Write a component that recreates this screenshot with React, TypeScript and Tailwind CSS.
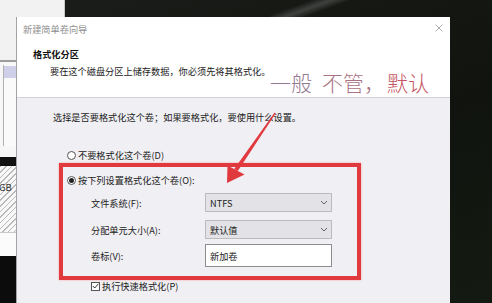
import React from "react";

const cjk = "font-['Noto_Sans_CJK_SC','Noto_Sans',sans-serif]";

const Chevron = () => (
  <svg width="8" height="5" viewBox="0 0 8 5" className="mr-[3px]">
    <polyline points="1,1 4,4 7,1" fill="none" stroke="#555" strokeWidth="0.9" />
  </svg>
);

const Combo = ({ value }: { value: string }) => (
  <div className="w-[127px] h-[19px] bg-[#e3e2e6] border border-[#bcbbbe] flex items-center justify-between pl-[4px]">
    <span className="text-[9.2px] leading-[12px] text-[#222]">{value}</span>
    <Chevron />
  </div>
);

const Radio = ({ checked, label }: { checked?: boolean; label: string }) => (
  <div className="flex items-center gap-[2px] h-[12px] ml-[14px]">
    <div className="w-[9px] h-[9px] rounded-full border border-[#555] bg-white flex items-center justify-center">
      {checked && <div className="w-[5px] h-[5px] rounded-full bg-[#222]" />}
    </div>
    <span className="text-[9.2px] leading-[12px] text-[#222]">{label}</span>
  </div>
);

const LeftWindow = () => (
  <div className="absolute left-0 top-0 w-[65px] h-[303px] bg-[#f0f0f0] border-r border-[#c8c8c8] flex flex-col">
    <div className="h-[60px] bg-[#f2f2f2]" />
    <div className="h-[2px] bg-[#9d9d9d]" />
    <div className="h-[95px] bg-[#f7f7f7] pl-[3px] pt-[3px] flex flex-col">
      <div className="h-[81px] border-l border-[#b0b0b0] bg-[#fafafa] pt-[1px]">
        <div className="h-[12px] bg-[#cfcfe9]" />
      </div>
    </div>
    <div className="h-[9px] bg-[#111]" />
    <div className="h-[66px] bg-[repeating-linear-gradient(135deg,#b9b9b9_0px,#b9b9b9_1px,#f8f8f8_1px,#f8f8f8_4px)] pt-[15px]">
      <span className={`${cjk} block text-[9.5px] leading-[12px] text-[#333] -ml-[1px]`}>GB</span>
    </div>
    <div className="h-[1px] bg-[#c9c9c9]" />
    <div className="h-[23px] bg-[#fbfbfb]" />
    <div className="flex-1 bg-[#0b0c0b]" />
  </div>
);

export default function App() {
  return (
    <div className={`${cjk} relative w-[492px] h-[303px] overflow-hidden bg-[linear-gradient(160deg,#1b1d1a,#10130e_55%,#141a12)]`}>
      {/* streaks on the dark desktop at the top */}
      <div className="absolute left-[270px] top-0 w-[90px] h-[17px] bg-[linear-gradient(160deg,transparent_30%,#5a5c5a_45%,transparent_60%)] opacity-60" />

      <LeftWindow />

      {/* wizard dialog */}
      <div className="absolute left-[16px] top-[17px] w-[434px] bottom-0 flex flex-col border-l border-[#a3a3a3]">
        <div className="h-[80px] bg-white flex flex-col relative">
          <div className="pt-[6px] pl-[6px] text-[9.2px] leading-[12px] text-[#8e8e8e]">新建简单卷向导</div>
          <div className="mt-[13px] pl-[16px] text-[9.2px] leading-[12px] font-bold text-[#111]">格式化分区</div>
          <div className="mt-[5px] pl-[33px] text-[9.2px] leading-[12px] text-[#222]">
            要在这个磁盘分区上储存数据，你必须先将其格式化。
          </div>
          <svg width="8" height="8" viewBox="0 0 8 8" className="absolute left-[418px] top-[7px]">
            <path d="M0.5 0.5 L7.5 7.5 M7.5 0.5 L0.5 7.5" stroke="#9a9a9a" strokeWidth="0.8" />
          </svg>
        </div>

        <div className="flex-1 bg-[#f0eff3] border-t border-[#d3d2d6] pt-[13px] pl-[36px] flex flex-col">
          <div className="text-[9.2px] leading-[12px] text-[#222]">
            选择是否要格式化这个卷；如果要格式化，要使用什么设置。
          </div>
          <div className="mt-[26px]">
            <Radio label="不要格式化这个卷(D)" />
          </div>
          <div className="mt-[13px]">
            <Radio checked label="按下列设置格式化这个卷(O):" />
          </div>

          <div className="ml-[38px] flex flex-col">
            <div className="mt-[7px] h-[19px] flex items-center">
              <span className="w-[114px] text-[9.2px] leading-[12px] text-[#222]">文件系统(F):</span>
              <Combo value="NTFS" />
            </div>
            <div className="mt-[8px] h-[19px] flex items-center">
              <span className="w-[114px] text-[9.2px] leading-[12px] text-[#222]">分配单元大小(A):</span>
              <Combo value="默认值" />
            </div>
            <div className="mt-[5px] h-[23px] flex items-center">
              <span className="w-[114px] text-[9.2px] leading-[12px] text-[#222]">卷标(V):</span>
              <div className="w-[127px] h-[23px] bg-white border border-[#8c8c8c] flex items-center pl-[4px]">
                <span className="text-[9.2px] leading-[12px] text-[#222]">新加卷</span>
              </div>
            </div>
            <div className="mt-[13px] h-[12px] flex items-center gap-[2px]">
              <div className="w-[9px] h-[9px] border border-[#555] bg-white flex items-center justify-center">
                <svg width="7" height="6" viewBox="0 0 7 6">
                  <polyline points="0.8,3 2.8,5 6.3,0.8" fill="none" stroke="#222" strokeWidth="0.9" />
                </svg>
              </div>
              <span className="text-[9.2px] leading-[12px] text-[#222]">执行快速格式化(P)</span>
            </div>
          </div>
        </div>
      </div>

      {/* red annotation: frame */}
      <div className="absolute left-[59px] top-[163px] w-[302px] h-[117px] border-[4px] border-[#e0393e] shadow-[0_0_2px_#f6a9ab]" />

      {/* red annotation: arrow */}
      <svg width="65" height="90" viewBox="0 0 65 90" className="absolute left-[220px] top-[100px]">
        <polygon points="54.6,12.6 55.6,13.4 17.8,71 14.2,69" fill="#e0393e" />
        <polygon points="7,83 24.5,74.5 7.5,65.5" fill="#e0393e" />
      </svg>

      {/* red annotation: text */}
      <div className="absolute left-[270px] top-[70px] flex text-[21px] leading-[25px] font-light whitespace-nowrap">
        <span className="text-[#93788f]">一般</span>
        <span className="ml-[10px] text-[#a97384]">不管，</span>
        <span className="ml-[2px] text-[#c65563]">默认</span>
      </div>
    </div>
  );
}
